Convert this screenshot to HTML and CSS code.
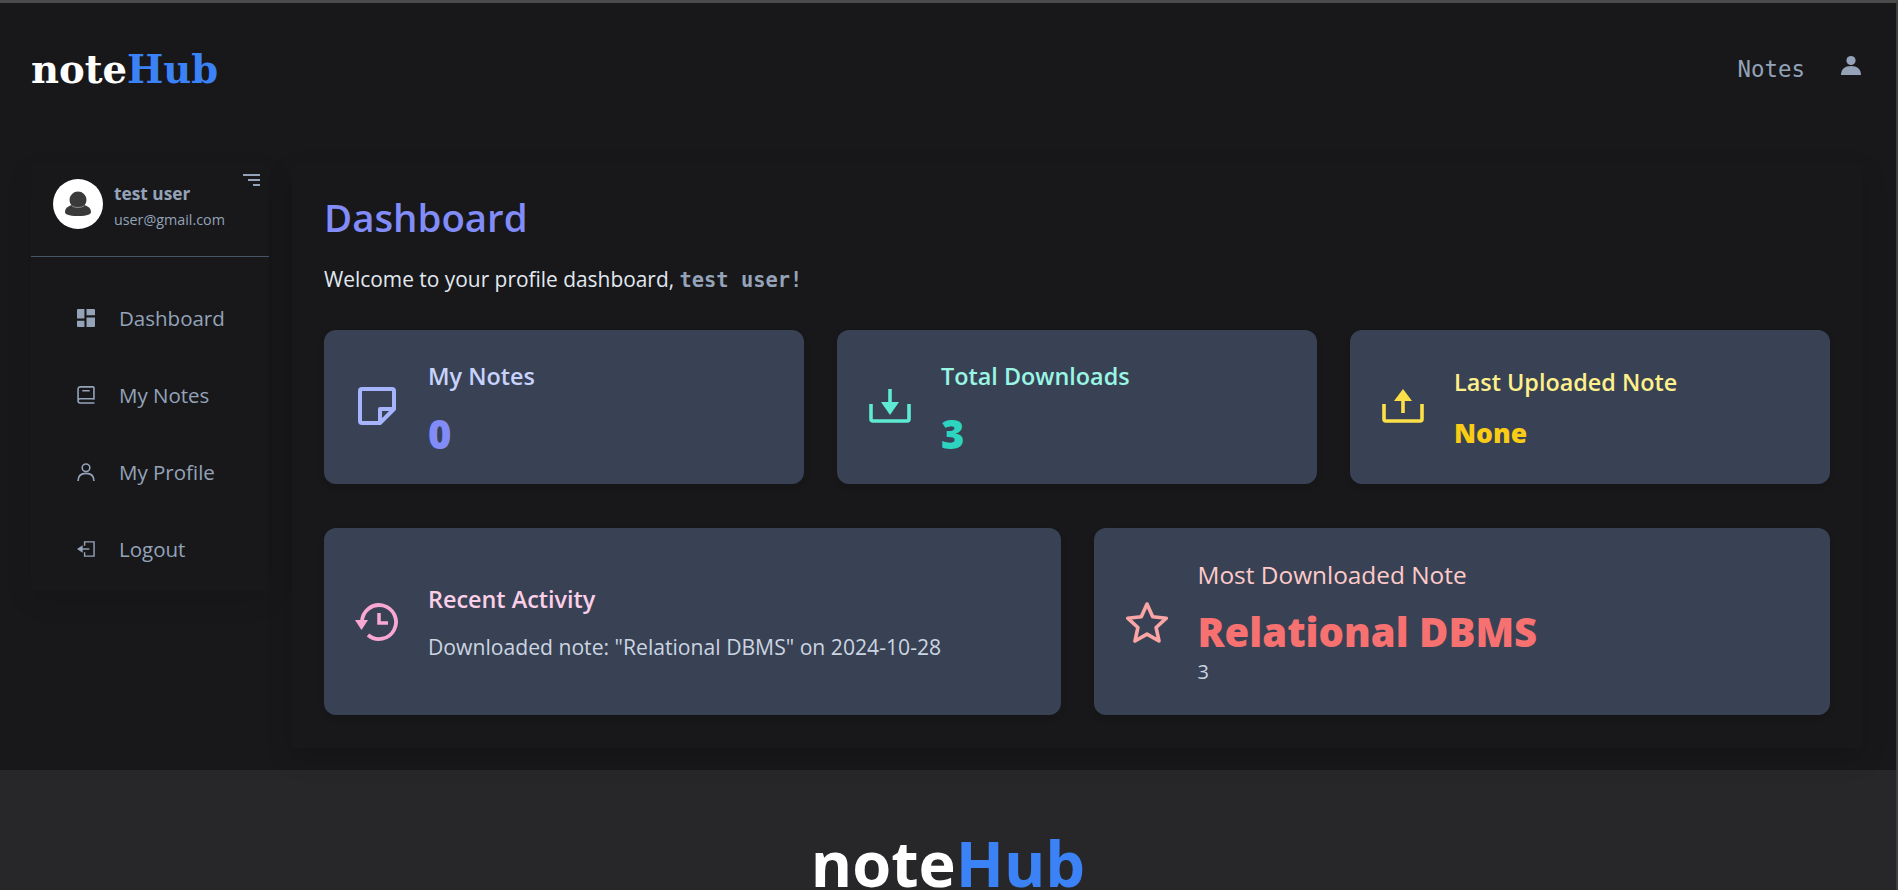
FILE: index.html
```html
<!DOCTYPE html>
<html lang="en">
<head>
    <meta charset="UTF-8">
    <meta name="viewport" content="width=device-width, initial-scale=1.0">
    <title>noteHub Dashboard</title>
    <link rel="stylesheet" href="styles.css">
</head>
<body>
    <header class="topbar">
        <a class="logo" href="#">note<span class="blue">Hub</span></a>
        <nav class="topnav">
            <a href="#">Notes</a>
            <svg class="topnav-user" viewBox="0 0 20 20"><circle cx="10" cy="5.5" r="4.6"/><path d="M0 20c0-6 4-9 10-9s10 3 10 9z"/></svg>
        </nav>
    </header>

    <div class="layout">
        <aside class="sidebar">
            <div class="profile">
                <div class="avatar">
                    <svg viewBox="0 0 50 50">
                        <circle cx="25" cy="21" r="8.5" fill="#3a3a3a"/>
                        <path d="M12 33c0-5 5-7.500 13-7.500s13 2.500 13 7.500c0 2-3 4-13 4s-13-2-13-4z" fill="#3a3a3a"/>
                        <path d="M19 27c3 2 9 2 12 0" fill="none" stroke="#8a8a8a" stroke-width="1"/>
                    </svg>
                </div>
                <div class="profile-text">
                    <div class="profile-name">test user</div>
                    <div class="profile-mail">user@gmail.com</div>
                </div>
                <svg class="toggle" viewBox="0 0 17 13"><path d="M0 1h17M5 6h12M10 11h7" fill="none" stroke="currentColor" stroke-width="2"/></svg>
            </div>
            <ul class="menu">
                <li>
                    <svg viewBox="0 0 17 17" fill="currentColor"><path d="M0 1a1 1 0 0 1 1-1h6v9H0zM0 11h7v6H1a1 1 0 0 1-1-1zM9 0h7a1 1 0 0 1 1 1v5H9zM9 8h8v8a1 1 0 0 1-1 1H9z"/></svg>
                    <a href="#">Dashboard</a>
                </li>
                <li>
                    <svg viewBox="0 0 17 17" fill="none" stroke="currentColor" stroke-width="1.500"><path d="M16 13V1.800A1 1 0 0 0 15 .8H3A2 2 0 0 0 1 2.800V14a2 2 0 0 0 2 2h13.500M1 14a2 2 0 0 1 2-2h13M5 4.500h7"/></svg>
                    <a href="#">My Notes</a>
                </li>
                <li>
                    <svg viewBox="0 0 17 17" fill="none" stroke="currentColor" stroke-width="1.500"><circle cx="8.500" cy="4.500" r="3.600"/><path d="M1 17c0-5 3-7.200 7.500-7.200S16 12 16 17"/></svg>
                    <a href="#">My Profile</a>
                </li>
                <li>
                    <svg viewBox="0 0 19 17" fill="none" stroke="currentColor" stroke-width="1.500"><path d="M8 5V1h10v15H8v-4"/><path d="M13 8.500H5"/><path d="M6 4.500v8L0 8.500z" fill="currentColor" stroke="none"/></svg>
                    <a href="#">Logout</a>
                </li>
            </ul>
        </aside>

        <main class="content">
            <h1 class="page-title">Dashboard</h1>
            <p class="welcome">Welcome to your profile dashboard, <span class="mono">test user!</span></p>

            <section class="row-three">
                <div class="card">
                    <svg class="card-icon indigo-icon" viewBox="-3 -2 44 44" fill="none" stroke="currentColor" stroke-width="4" stroke-linejoin="round"><path d="M4 2h30a2 2 0 0 1 2 2v18L22 36H4a2 2 0 0 1-2-2V4a2 2 0 0 1 2-2z"/><path d="M35 22H22v13"/></svg>
                    <div class="card-body">
                        <h3 class="card-title indigo-title">My Notes</h3>
                        <div class="card-value indigo-value">0</div>
                    </div>
                </div>
                <div class="card">
                    <svg class="card-icon teal-icon" viewBox="-1 -4 44 44" fill="none" stroke="currentColor" stroke-width="3.600"><path d="M2 15v15a2 2 0 0 0 2 2h34a2 2 0 0 0 2-2V15"/><path d="M21 0v16"/><path d="M12 13h18l-9 13z" fill="currentColor" stroke="none"/></svg>
                    <div class="card-body">
                        <h3 class="card-title teal-title">Total Downloads</h3>
                        <div class="card-value teal-value">3</div>
                    </div>
                </div>
                <div class="card card-small">
                    <svg class="card-icon yellow-icon" viewBox="-1 -4 44 44" fill="none" stroke="currentColor" stroke-width="3.600"><path d="M2 15v15a2 2 0 0 0 2 2h34a2 2 0 0 0 2-2V15"/><path d="M21 10v14"/><path d="M12 12L21 0l9 12z" fill="currentColor" stroke="none"/></svg>
                    <div class="card-body">
                        <h3 class="card-title yellow-title">Last Uploaded Note</h3>
                        <div class="card-value yellow-value">None</div>
                    </div>
                </div>
            </section>

            <section class="row-two">
                <div class="card">
                    <svg class="card-icon pink-icon" viewBox="0 -3 44 44" fill="none" stroke="currentColor" stroke-width="3.800"><path d="M7 19A17 17 0 1 1 13 32"/><path d="M0 17h13l-6.500 10z" fill="currentColor" stroke="none"/><path d="M24 10v10h9" stroke-width="3.500"/></svg>
                    <div class="card-body">
                        <h3 class="card-title pink-title">Recent Activity</h3>
                        <p class="activity">Downloaded note: "Relational DBMS" on 2024-10-28</p>
                    </div>
                </div>
                <div class="card card-most">
                    <svg class="card-icon red-icon" viewBox="0 -1 44 44" fill="none" stroke="currentColor" stroke-width="3.600" stroke-linejoin="round"><path d="M22 3l5.700 12.800 13.600 1.400-10.200 9.300 2.900 13.500L22 33.100 10 40l2.900-13.500L2.700 17.200l13.600-1.400z"/></svg>
                    <div class="card-body">
                        <h3 class="card-title red-title">Most Downloaded Note</h3>
                        <div class="card-value red-value">Relational DBMS</div>
                        <div class="card-count">3</div>
                    </div>
                </div>
            </section>
        </main>
    </div>

    <footer class="footer">
        <div class="footer-logo">note<span class="blue">Hub</span></div>
    </footer>
</body>
</html>
```

FILE: styles.css
```css
* {
    margin: 0;
    padding: 0;
    box-sizing: border-box;
}

html, body {
    height: 100%;
    overflow: hidden;
}

body {
    font-family: "Open Sans", "Noto Sans", sans-serif;
    background-color: #18181b;
    color: #e2e8f0;
    border-top: 3px solid #4b4b4b;
    border-right: 2px solid #3f3f3f;
}

a {
    color: inherit;
    text-decoration: none;
}

.blue {
    color: #3b82f6;
}

.topbar {
    display: flex;
    justify-content: space-between;
    align-items: center;
    height: 132px;
    padding: 0 35px 0 31px;
}

.logo {
    font-family: "DejaVu Serif", serif;
    font-weight: bold;
    font-size: 38.500px;
    color: #fff;
}

.topnav {
    display: flex;
    align-items: center;
    gap: 36px;
    color: #94a3b8;
    font-family: "DejaVu Sans Mono", monospace;
    font-size: 22.400px;
}

.topnav-user {
    width: 20px;
    height: 20px;
    fill: currentColor;
    margin-top: -8px;
}

.layout {
    display: flex;
    gap: 23px;
    padding: 29px 34px 0 31px;
    height: 635px;
    align-items: flex-start;
}

.sidebar {
    width: 238px;
    flex-shrink: 0;
    height: 426px;
    box-shadow: 0 10px 25px rgba(0, 0, 0, 0.1);
}

.profile {
    position: relative;
    display: flex;
    align-items: center;
    gap: 11px;
    height: 93px;
    padding: 0 0 13px 22px;
    border-bottom: 1px solid #475569;
}

.avatar {
    width: 50px;
    height: 50px;
    border-radius: 50%;
    background: #fff;
    flex-shrink: 0;
}

.avatar svg {
    display: block;
    width: 50px;
    height: 50px;
}

.profile-text {
    padding-top: 7px;
}

.profile-name {
    font-size: 17.300px;
    font-weight: 700;
    color: #94a3b8;
    line-height: 26px;
}

.profile-mail {
    font-size: 14.300px;
    color: #94a3b8;
    line-height: 26px;
}

.toggle {
    position: absolute;
    top: 10px;
    right: 9px;
    width: 17px;
    height: 13px;
    color: #94a3b8;
}

.menu {
    list-style: none;
    padding-top: 22px;
}

.menu li {
    display: flex;
    align-items: center;
    height: 77px;
    padding-left: 46px;
    color: #94a3b8;
    font-size: 20.500px;
}

.menu svg {
    width: 18px;
    height: 18px;
    margin-right: 24px;
    flex-shrink: 0;
}

.content {
    flex: 1;
    height: 584px;
    padding: 33px 32px 32px;
    box-shadow: 0 10px 25px rgba(0, 0, 0, 0.15);
}

.page-title {
    font-size: 38.400px;
    line-height: 40px;
    font-weight: 600;
    color: #818cf8;
}

.welcome {
    font-size: 20.900px;
    line-height: 24px;
    margin: 30px 0 38px;
}

.mono {
    font-family: "DejaVu Sans Mono", monospace;
    font-size: 20.400px;
    font-weight: bold;
    color: #94a3b8;
}

.row-three {
    display: grid;
    grid-template-columns: repeat(3, 1fr);
    gap: 33px;
    height: 154px;
}

.row-two {
    display: grid;
    grid-template-columns: 1fr 1fr;
    gap: 33px;
    height: 187px;
    margin-top: 44px;
}

.card {
    display: flex;
    align-items: center;
    background-color: #394254;
    border-radius: 12px;
    padding: 0 31px;
    box-shadow: 0 4px 6px rgba(0, 0, 0, 0.1);
}

.card-icon {
    width: 44px;
    height: 44px;
    margin-right: 29px;
    flex-shrink: 0;
}

.card-body {
    padding-top: 2px;
}

.card-title {
    font-size: 23.400px;
    line-height: 28px;
    font-weight: 600;
}

.card-value {
    font-size: 40px;
    line-height: 40px;
    font-weight: 800;
    margin-top: 24px;
}

.card-small .card-value {
    font-size: 26.500px;
    line-height: 32px;
    margin-top: 21px;
}

.card-most .card-value {
    line-height: 56px;
    margin-top: 15px;
}

.card-count {
    font-size: 20px;
    line-height: 24px;
    color: #cbd5e1;
}

.activity {
    font-size: 21.150px;
    line-height: 28px;
    margin-top: 20px;
    color: #cbd5e1;
}

.indigo-icon { color: #a5b4fc; }
.indigo-title { color: #c7d2fe; }
.indigo-value { color: #818cf8; }
.teal-icon { color: #5eead4; }
.teal-title { color: #99f6e4; }
.teal-value { color: #2dd4bf; }
.yellow-icon { color: #fde047; }
.yellow-title { color: #fef08a; }
.yellow-value { color: #facc15; }
.pink-icon { color: #f9a8d4; }
.pink-title { color: #fbcfe8; }
.red-icon { color: #fca5a5; }
.red-title { color: #fecaca; font-size: 24.400px; font-weight: 500; }
.red-value { color: #f87171; }

.footer {
    background-color: #27272a;
    height: 300px;
    padding-top: 66px;
    text-align: center;
}

.footer-logo {
    font-size: 63px;
    line-height: 54px;
    font-weight: 700;
    color: #fff;
}
```
